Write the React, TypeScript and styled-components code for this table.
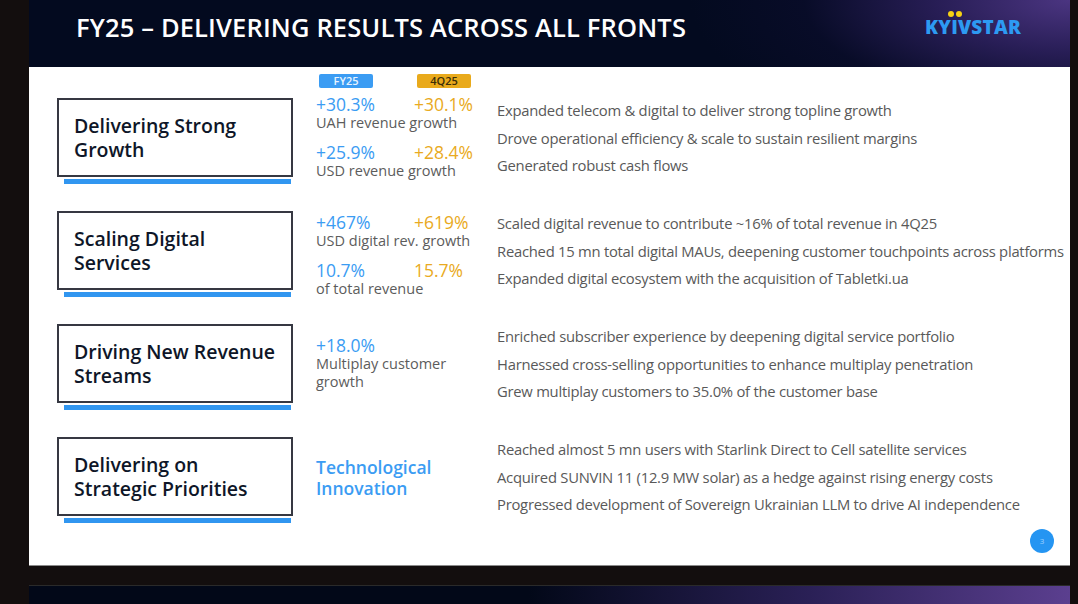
import React from 'react';
import styled, {createGlobalStyle} from 'styled-components';

type Metric = {fy: string, q: string}

type Pillar = {
    title: [string, string]
    groups?: Array<{values: Metric, label: string[]}>
    highlight?: string[]
    bullets: string[]
    lift: number
}

const pillars: Pillar[] = [
    {
        title: ['Delivering Strong', 'Growth'],
        groups: [
            {values: {fy: '+30.3%', q: '+30.1%'}, label: ['UAH revenue growth']},
            {values: {fy: '+25.9%', q: '+28.4%'}, label: ['USD revenue growth']},
        ],
        bullets: [
            'Expanded telecom & digital to deliver strong topline growth',
            'Drove operational efficiency & scale to sustain resilient margins',
            'Generated robust cash flows',
        ],
        lift: 8,
    },
    {
        title: ['Scaling Digital', 'Services'],
        groups: [
            {values: {fy: '+467%', q: '+619%'}, label: ['USD digital rev. growth']},
            {values: {fy: '10.7%', q: '15.7%'}, label: ['of total revenue']},
        ],
        bullets: [
            'Scaled digital revenue to contribute ~16% of total revenue in 4Q25',
            'Reached 15 mn total digital MAUs, deepening customer touchpoints across platforms',
            'Expanded digital ecosystem with the acquisition of Tabletki.ua',
        ],
        lift: -2,
    },
    {
        title: ['Driving New Revenue', 'Streams'],
        groups: [
            {values: {fy: '+18.0%', q: ''}, label: ['Multiplay customer', 'growth']},
        ],
        bullets: [
            'Enriched subscriber experience by deepening digital service portfolio',
            'Harnessed cross-selling opportunities to enhance multiplay penetration',
            'Grew multiplay customers to 35.0% of the customer base',
        ],
        lift: 8,
    },
    {
        title: ['Delivering on', 'Strategic Priorities'],
        highlight: ['Technological', 'Innovation'],
        bullets: [
            'Reached almost 5 mn users with Starlink Direct to Cell satellite services',
            'Acquired SUNVIN 11 (12.9 MW solar) as a hedge against rising energy costs',
            'Progressed development of Sovereign Ukrainian LLM to drive AI independence',
        ],
        lift: 4,
    },
]

function App() {
    return (
        <>
            <GlobalStyle/>
            <Deck>
                <Slide>
                    <Header>
                        <Title>FY25 – DELIVERING RESULTS ACROSS ALL FRONTS</Title>
                        <Logo>KY<LogoI>I</LogoI>VSTAR</Logo>
                    </Header>
                    <Body>
                        <BadgeRow>
                            <span/>
                            <MetricGrid>
                                <Badge $tone="blue">FY25</Badge>
                                <Badge $tone="amber">4Q25</Badge>
                            </MetricGrid>
                        </BadgeRow>
                        {pillars.map((p, i) => (
                            <Section key={i}>
                                <PillarBox>
                                    <PillarCard>{p.title[0]}<br/>{p.title[1]}</PillarCard>
                                    <PillarBar/>
                                </PillarBox>
                                <Metrics $lift={p.lift}>
                                    {p.groups && p.groups.map((g, j) => (
                                        <MetricGroup key={j}>
                                            <MetricGrid>
                                                <Value $tone="blue">{g.values.fy}</Value>
                                                <Value $tone="amber">{g.values.q}</Value>
                                            </MetricGrid>
                                            <Label>{g.label.map((l, k) => <div key={k}>{l}</div>)}</Label>
                                        </MetricGroup>
                                    ))}
                                    {p.highlight && (
                                        <Highlight>{p.highlight[0]}<br/>{p.highlight[1]}</Highlight>
                                    )}
                                </Metrics>
                                <Bullets>
                                    {p.bullets.map((b, j) => <li key={j}>{b}</li>)}
                                </Bullets>
                            </Section>
                        ))}
                        <Footer>
                            <PageNo>3</PageNo>
                        </Footer>
                    </Body>
                </Slide>
                <NextHeader/>
            </Deck>
        </>
    );
}

export default App;


const GlobalStyle = createGlobalStyle`
  html, body {
    margin: 0;
    padding: 0;
    background: #130e0e;
    overflow: hidden;
  }

  body {
    font-family: "Open Sans", "Liberation Sans", sans-serif;
  }
`

const Deck = styled.div`
  width: 1078px;
  height: 604px;
  box-sizing: border-box;
  padding: 0 8px 0 29px;
  display: flex;
  flex-direction: column;
  gap: 19px;
  overflow: hidden;
`

const Slide = styled.div`
  display: flex;
  flex-direction: column;
`

const Header = styled.div`
  height: 67px;
  box-sizing: border-box;
  padding: 11px 49px 0 47px;
  display: flex;
  justify-content: space-between;
  align-items: flex-start;
  background: radial-gradient(ellipse 380px 150px at 100% 0%, #4b3581 0%, rgba(52, 36, 104, 0.75) 35%, rgba(20, 16, 60, 0.3) 70%, rgba(3, 10, 31, 0) 100%),
  #030a1f;
`

const Title = styled.h1`
  margin: 0;
  font-size: 25.5px;
  line-height: 33px;
  font-weight: 600;
  color: #ffffff;
  letter-spacing: 0.15px;
`

const Logo = styled.div`
  margin-top: 6px;
  font-family: "Open Sans", sans-serif;
  font-size: 19px;
  line-height: 20px;
  font-weight: 800;
  color: #2d9af2;
  letter-spacing: 0.2px;
`

const LogoI = styled.span`
  position: relative;
  display: inline-block;

  &::before, &::after {
    content: '';
    position: absolute;
    top: -6px;
    width: 6px;
    height: 6px;
    border-radius: 50%;
    background: #f6d214;
  }

  &::before {
    left: -3px;
  }

  &::after {
    left: 5px;
  }
`

const Body = styled.div`
  height: 499px;
  box-sizing: border-box;
  padding-top: 7px;
  background: #ffffff;
  border-bottom: 1px solid #8a8a8a;
  display: flex;
  flex-direction: column;
  gap: 7px;
`

const BadgeRow = styled.div`
  display: grid;
  grid-template-columns: 236px 158px;
  column-gap: 23px;
  padding-left: 28px;
  height: 14px;
  margin-bottom: -7px;
`

const MetricGrid = styled.div`
  display: grid;
  grid-template-columns: 98px auto;
`

const Badge = styled.div<{$tone: 'blue' | 'amber'}>`
  width: 54px;
  height: 14px;
  margin-left: 3px;
  border-radius: 2px;
  background: ${p => p.$tone === 'blue' ? '#3b9cf3' : '#e9aa1c'};
  color: ${p => p.$tone === 'blue' ? '#e8f3ff' : '#3a2d08'};
  font-size: 11px;
  line-height: 14px;
  font-weight: 600;
  text-align: center;
`

const Section = styled.div`
  height: 106px;
  display: grid;
  grid-template-columns: 236px 158px 1fr;
  column-gap: 23px;
  padding-left: 28px;
  align-items: center;
`

const PillarBox = styled.div`
  display: flex;
  flex-direction: column;
  gap: 2px;
`

const PillarCard = styled.div`
  height: 79px;
  box-sizing: border-box;
  border: 2px solid #363842;
  padding: 0 10px 0 15px;
  display: flex;
  flex-direction: column;
  justify-content: center;
  font-size: 19.5px;
  line-height: 24px;
  font-weight: 600;
  color: #0e1628;
`

const PillarBar = styled.div`
  height: 5px;
  margin: 0 2px 0 7px;
  background: #3196f0;
`

const Metrics = styled.div<{$lift: number}>`
  display: flex;
  flex-direction: column;
  gap: 11px;
  margin-bottom: ${p => p.$lift}px;
`

const MetricGroup = styled.div`
  display: flex;
  flex-direction: column;
`

const Value = styled.div<{$tone: 'blue' | 'amber'}>`
  font-size: 17.5px;
  line-height: 19px;
  color: ${p => p.$tone === 'blue' ? '#3b9cf3' : '#e9aa22'};
`

const Label = styled.div`
  font-size: 14.5px;
  line-height: 18px;
  color: #5c5c5c;
`

const Highlight = styled.div`
  font-size: 17.5px;
  line-height: 21px;
  font-weight: 600;
  color: #3b9cf3;
`

const Bullets = styled.ul`
  margin: 0 0 5px;
  padding: 0;
  list-style: none;
  font-size: 14.8px;
  line-height: 27.5px;
  color: #595959;
  white-space: nowrap;
  letter-spacing: -0.25px;
`

const Footer = styled.div`
  display: flex;
  justify-content: flex-end;
  padding-right: 16px;
  margin-top: -11px;
`

const PageNo = styled.div`
  width: 24px;
  height: 24px;
  border-radius: 50%;
  background: #2595f2;
  color: #9fd0ff;
  font-size: 8px;
  line-height: 24px;
  text-align: center;
`

const NextHeader = styled.div`
  height: 60px;
  flex-shrink: 0;
  background: linear-gradient(90deg, #020818 0%, #020818 48%, #2a2056 75%, #5b3f8f 100%);
  border-top: 1px solid #2a2a2a;
`
